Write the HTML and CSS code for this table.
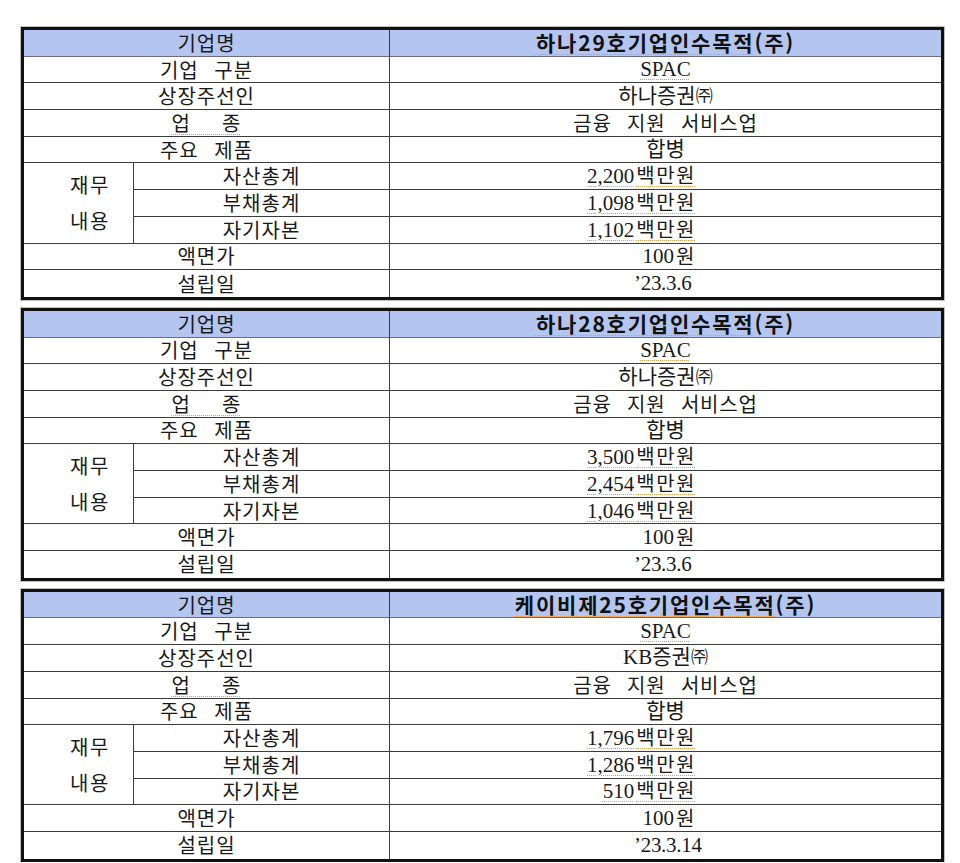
FILE: index.html
```html
<!DOCTYPE html>
<html lang="ko">
<head>
<meta charset="utf-8">
<title>SPAC 개요</title>
<link rel="stylesheet" href="styles.css">
</head>
<body>
<div class="page">
  <div class="card">
    <div class="c lab hd span2">기업명</div>
    <div class="c val hd name"><span class="sp">하나29호기업인수목적</span>(주)</div>
    <div class="c lab span2">기업 구분</div>
    <div class="c val serif"><span class="sp">SPAC</span></div>
    <div class="c lab span2">상장주선인</div>
    <div class="c val serif">하나증권<span class="ju">㈜</span></div>
    <div class="c lab span2"><span class="sp">업&nbsp;&nbsp;종</span></div>
    <div class="c val serif ks">금융 지원 서비스업</div>
    <div class="c lab span2">주요 제품</div>
    <div class="c val serif">합병</div>
    <div class="c fin">재무<br>내용</div>
    <div class="c lab">자산총계</div>
    <div class="c val serif money"><span class="sp">2,200<span class="won">백만원</span></span></div>
    <div class="c lab">부채총계</div>
    <div class="c val serif money"><span class="sp">1,098<span class="won">백만원</span></span></div>
    <div class="c lab">자기자본</div>
    <div class="c val serif money"><span class="sp">1,102<span class="won">백만원</span></span></div>
    <div class="c lab span2">액면가</div>
    <div class="c val serif money">100<span class="won">원</span></div>
    <div class="c lab span2 last">설립일</div>
    <div class="c val serif date last">’23.3.6</div>
  </div>

  <div class="card">
    <div class="c lab hd span2">기업명</div>
    <div class="c val hd name"><span class="sp">하나28호기업인수목적</span>(주)</div>
    <div class="c lab span2">기업 구분</div>
    <div class="c val serif"><span class="sp">SPAC</span></div>
    <div class="c lab span2">상장주선인</div>
    <div class="c val serif">하나증권<span class="ju">㈜</span></div>
    <div class="c lab span2"><span class="sp">업&nbsp;&nbsp;종</span></div>
    <div class="c val serif ks">금융 지원 서비스업</div>
    <div class="c lab span2">주요 제품</div>
    <div class="c val serif">합병</div>
    <div class="c fin">재무<br>내용</div>
    <div class="c lab">자산총계</div>
    <div class="c val serif money"><span class="sp">3,500<span class="won">백만원</span></span></div>
    <div class="c lab">부채총계</div>
    <div class="c val serif money"><span class="sp">2,454<span class="won">백만원</span></span></div>
    <div class="c lab">자기자본</div>
    <div class="c val serif money"><span class="sp">1,046<span class="won">백만원</span></span></div>
    <div class="c lab span2">액면가</div>
    <div class="c val serif money">100<span class="won">원</span></div>
    <div class="c lab span2 last">설립일</div>
    <div class="c val serif date last">’23.3.6</div>
  </div>

  <div class="card">
    <div class="c lab hd span2">기업명</div>
    <div class="c val hd name"><span class="sp">케이비제25호기업인수목적</span>(주)</div>
    <div class="c lab span2">기업 구분</div>
    <div class="c val serif"><span class="sp">SPAC</span></div>
    <div class="c lab span2">상장주선인</div>
    <div class="c val serif">KB증권<span class="ju">㈜</span></div>
    <div class="c lab span2"><span class="sp">업&nbsp;&nbsp;종</span></div>
    <div class="c val serif ks">금융 지원 서비스업</div>
    <div class="c lab span2">주요 제품</div>
    <div class="c val serif">합병</div>
    <div class="c fin">재무<br>내용</div>
    <div class="c lab">자산총계</div>
    <div class="c val serif money"><span class="sp">1,796<span class="won">백만원</span></span></div>
    <div class="c lab">부채총계</div>
    <div class="c val serif money"><span class="sp">1,286<span class="won">백만원</span></span></div>
    <div class="c lab">자기자본</div>
    <div class="c val serif money"><span class="sp">510<span class="won">백만원</span></span></div>
    <div class="c lab span2">액면가</div>
    <div class="c val serif money">100<span class="won">원</span></div>
    <div class="c lab span2 last">설립일</div>
    <div class="c val serif date last">’23.3.14</div>
  </div>
</div>
</body>
</html>
```

FILE: styles.css
```css
html, body {
  margin: 0;
  padding: 0;
  background: #ffffff;
}

.page {
  padding: 27px 0 0 21px;
  display: flex;
  flex-direction: column;
  gap: 8px;
  font-family: "Noto Sans CJK KR", sans-serif;
  color: #1a1a1a;
}

.card {
  width: 923px;
  box-sizing: border-box;
  border: 3px solid #111111;
  box-shadow: 0 0 0 1px rgba(0, 0, 0, 0.25);
  display: grid;
  grid-template-columns: 110px 256px 551px;
  grid-auto-rows: 26.7px;
}

.c {
  box-sizing: border-box;
  border-bottom: 1px solid #3c3c3c;
  display: flex;
  align-items: center;
  justify-content: center;
  font-size: 20px;
  line-height: 1;
  white-space: nowrap;
  word-spacing: 0.45em;
}

.c.last {
  border-bottom: none;
}

.lab {
  border-right: 1px solid #3c3c3c;
  font-weight: 400;
  letter-spacing: 1px;
}

.span2 {
  grid-column: 1 / 3;
}

.hd {
  background: #b4c6f0;
  border-bottom-color: #6a6e80;
}

.name {
  font-weight: 700;
  font-size: 21px;
  letter-spacing: 1.8px;
  color: #111111;
}

.fin {
  grid-row: span 3;
  border-right: 1px solid #3c3c3c;
  justify-content: flex-start;
  padding-left: 46px;
  line-height: 36px;
  letter-spacing: 1.5px;
}

.serif {
  font-family: "Liberation Serif", "Noto Sans CJK KR", serif;
  font-size: 21px;
}

.ks {
  font-family: "Noto Sans CJK KR", sans-serif;
  font-size: 20px;
  word-spacing: 0.45em;
  letter-spacing: 0.8px;
}

.won {
  font-family: "Noto Sans CJK KR", sans-serif;
  font-size: 20px;
  letter-spacing: 1.5px;
  margin-left: 2px;
}

.ju {
  font-size: 17px;
}

.money {
  justify-content: flex-end;
  padding-right: 245px;
}

.date {
  justify-content: flex-start;
  padding-left: 244px;
  letter-spacing: -0.3px;
}

.sp {
  text-decoration: underline dotted #e39a4f;
  text-decoration-thickness: 1px;
  text-underline-offset: 3px;
}
```
